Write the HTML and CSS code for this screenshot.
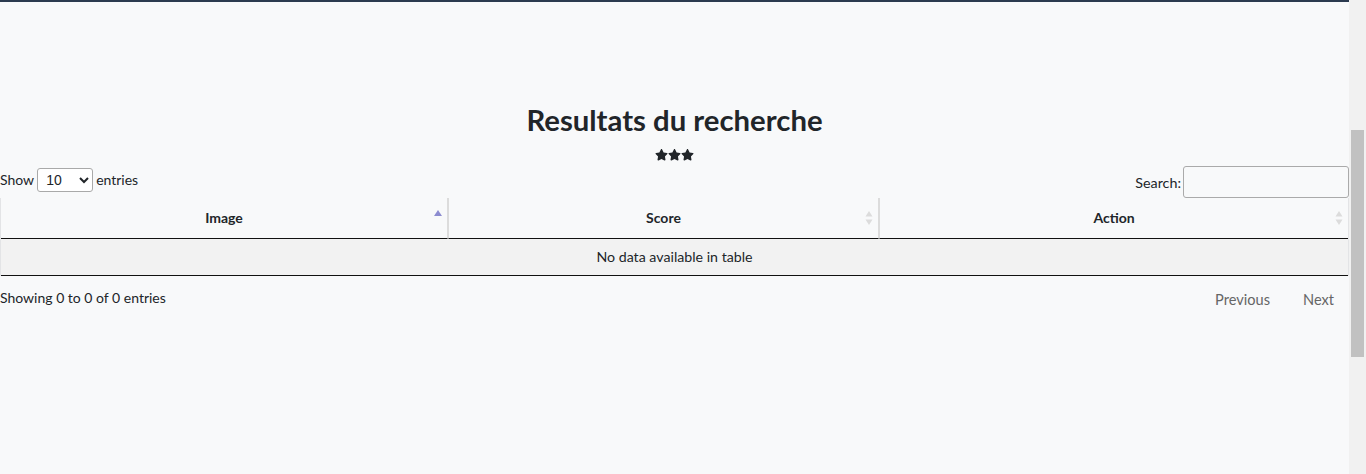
FILE: index.html
```html
<!DOCTYPE html>
<html lang="fr">
<head>
<meta charset="utf-8">
<title>Resultats du recherche</title>
<link rel="stylesheet" href="styles.css">
</head>
<body>
<div class="viewport">
  <main class="main">
    <div class="topbar"></div>
    <section class="results">
      <h2 class="title">Resultats du recherche</h2>
      <div class="stars">
        <svg class="star" viewBox="0 0 576 512"><path d="M259.3 17.8L194 150.2 47.9 171.5c-26.2 3.8-36.7 36.1-17.7 54.6l105.7 103-25 145.5c-4.5 26.3 23.2 46 46.4 33.7L288 439.6l130.7 68.7c23.2 12.2 50.9-7.4 46.4-33.7l-25-145.5 105.7-103c19-18.5 8.5-50.8-17.7-54.6L382 150.2 316.7 17.8c-11.7-23.6-45.6-23.9-57.4 0z"/></svg>
        <svg class="star" viewBox="0 0 576 512"><path d="M259.3 17.8L194 150.2 47.9 171.5c-26.2 3.8-36.7 36.1-17.7 54.6l105.7 103-25 145.5c-4.5 26.3 23.2 46 46.4 33.7L288 439.6l130.7 68.7c23.2 12.2 50.9-7.4 46.4-33.7l-25-145.5 105.7-103c19-18.5 8.5-50.8-17.7-54.6L382 150.2 316.7 17.8c-11.7-23.6-45.6-23.9-57.4 0z"/></svg>
        <svg class="star" viewBox="0 0 576 512"><path d="M259.3 17.8L194 150.2 47.9 171.5c-26.2 3.8-36.7 36.1-17.7 54.6l105.7 103-25 145.5c-4.5 26.3 23.2 46 46.4 33.7L288 439.6l130.7 68.7c23.2 12.2 50.9-7.4 46.4-33.7l-25-145.5 105.7-103c19-18.5 8.5-50.8-17.7-54.6L382 150.2 316.7 17.8c-11.7-23.6-45.6-23.9-57.4 0z"/></svg>
      </div>
      <div class="dt-wrapper">
        <div class="dt-top">
          <label class="dt-length">Show <select class="dt-select"><option>10</option><option>25</option><option>50</option><option>100</option></select> entries</label>
          <label class="dt-filter">Search:<input class="dt-input" type="search"></label>
        </div>
        <table class="dt-table">
          <thead>
            <tr>
              <th class="col-image">Image<span class="sort sort-asc"><svg viewBox="0 0 8 6"><path d="M4 0L8 6H0z"/></svg></span></th>
              <th class="col-score">Score<span class="sort sort-both"><svg viewBox="0 0 8 14"><path d="M4 0L7.5 5.5H.5z M4 14L7.5 8.5H.5z"/></svg></span></th>
              <th class="col-action">Action<span class="sort sort-both"><svg viewBox="0 0 8 14"><path d="M4 0L7.5 5.5H.5z M4 14L7.5 8.5H.5z"/></svg></span></th>
            </tr>
          </thead>
          <tbody>
            <tr class="odd"><td colspan="3" class="empty">No data available in table</td></tr>
          </tbody>
        </table>
        <div class="dt-bottom">
          <div class="dt-info">Showing 0 to 0 of 0 entries</div>
          <div class="dt-paginate">
            <span class="pg-btn">Previous</span>
            <span class="pg-btn">Next</span>
          </div>
        </div>
      </div>
    </section>
  </main>
  <aside class="scrollbar"><div class="thumb"></div></aside>
</div>
</body>
</html>
```
FILE: styles.css
```css
html, body {
  margin: 0;
  padding: 0;
  height: 100%;
}
body {
  background: #f8f9fa;
  color: #212529;
  font-family: Lato, "Open Sans", sans-serif;
  font-size: 14px;
  line-height: 20px;
  overflow: hidden;
}
.viewport {
  display: flex;
  height: 474px;
}
.main {
  flex: 1;
  min-width: 0;
}
.topbar {
  height: 2px;
  background: #2b3a4f;
}
.results {
  padding-top: 100px;
}
.title {
  margin: 0;
  text-align: center;
  font-size: 29.3px;
  font-weight: 700;
  line-height: 35px;
  color: #212529;
}
.stars {
  display: flex;
  justify-content: center;
  gap: 0;
  margin-top: 12px;
  height: 12px;
  align-items: center;
}
.star {
  width: 13px;
  height: 11.6px;
  fill: #212529;
}
.dt-top {
  display: flex;
  justify-content: space-between;
  align-items: flex-start;
  margin-top: 5px;
}
.dt-length {
  display: flex;
  align-items: center;
  gap: 3px;
  padding-top: 1px;
  height: 25px;
}
.dt-select {
  width: 56px;
  height: 24px;
  font-family: Arial, "Liberation Sans", sans-serif;
  font-size: 14px;
  padding: 0 4px;
  border: 1px solid #a9a9a9;
  border-radius: 3px;
  background: #fff;
  color: #212529;
}
.dt-filter {
  display: flex;
  align-items: center;
  height: 32px;
  padding-top: 2px;
  box-sizing: border-box;
  font-size: 14.3px;
}
.dt-input {
  box-sizing: border-box;
  width: 166px;
  height: 32px;
  margin-left: 2px;
  margin-top: -2px;
  border: 1px solid #aaa;
  border-radius: 3px;
  background: transparent;
  padding: 5px;
  font: inherit;
}
.dt-table {
  width: 100%;
  border-collapse: separate;
  border-spacing: 0;
  border-left: 1px solid #e3e4e6;
  border-right: 1px solid #e3e4e6;
}
.dt-table th {
  position: relative;
  height: 40px;
  box-sizing: border-box;
  padding: 10px 14px;
  font-weight: 700;
  text-align: center;
  border-bottom: 1px solid #111;
  border-right: 1px solid #dcdcdc;
  border-left: 1px solid #dcdcdc;
}
.dt-table th:first-child { border-left: none; }
.dt-table th:last-child { border-right: none; }
.col-image { width: 447px; }
.col-score { width: 431px; }
.sort {
  position: absolute;
  right: 5px;
  top: 50%;
  display: flex;
}
.sort-asc {
  transform: translateY(-8px);
}
.sort-asc svg {
  width: 8px;
  height: 6px;
  fill: #8c8cd0;
}
.sort-both {
  transform: translateY(-7px);
}
.sort-both svg {
  width: 8px;
  height: 14px;
  fill: #dcdcdc;
}
.dt-table td {
  padding: 8px 10px;
  height: 36px;
  box-sizing: border-box;
}
.dt-table tbody tr.odd {
  background: #f2f2f2;
}
.dt-table tbody tr:last-child td {
  border-bottom: 1px solid #111;
}
.empty {
  text-align: center;
  font-size: 14.2px;
}
.dt-bottom {
  display: flex;
  justify-content: space-between;
  align-items: flex-start;
}
.dt-info {
  padding-top: 12px;
}
.dt-paginate {
  display: flex;
  padding-top: 7px;
  font-size: 14.6px;
}
.pg-btn {
  color: #666;
  padding: 6px 14px 6px 15px;
  margin-left: 2px;
  border: 1px solid transparent;
}
.pg-btn:last-child {
  padding-right: 14px;
}
.scrollbar {
  width: 17px;
  flex: none;
  background: #f1f1f1;
  display: flex;
  flex-direction: column;
  align-items: center;
}
.thumb {
  margin-top: 130px;
  width: 13px;
  height: 227px;
  background: #c1c1c1;
}
```
